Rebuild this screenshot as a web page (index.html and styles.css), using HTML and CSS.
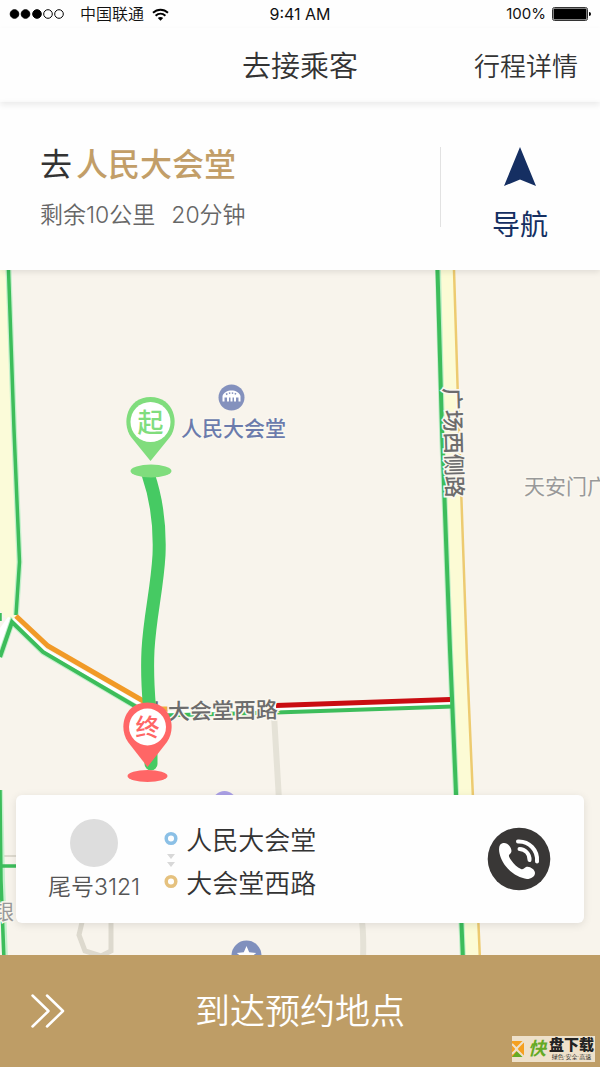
FILE: index.html
```html
<!DOCTYPE html>
<html lang="zh-CN">
<head>
  <meta charset="UTF-8" />
  <meta name="viewport" content="width=device-width, initial-scale=1.0"/>
  <title>去接乘客</title>
  <link rel="stylesheet" href="styles.css">
</head>
<body>

<div class="status">
  <div class="status-left">
    <svg width="55" height="12" viewBox="0 0 55 12" aria-hidden="true">
      <g stroke="#000">
        <circle cx="5.500" cy="6" r="4.300"/><circle cx="16.500" cy="6" r="4.300"/><circle cx="28" cy="6" r="4.300"/>
        <circle cx="39" cy="6" r="4.300" fill="none"/><circle cx="50" cy="6" r="4.300" fill="none"/>
      </g>
    </svg>
    <span class="carrier">中国联通</span>
    <svg width="17" height="13" viewBox="0 0 17 13" aria-hidden="true">
      <path d="M1 4.800C5.300.700 11.700.700 16 4.800M3.600 7.700c2.900-2.700 6.900-2.700 9.800 0" fill="none" stroke="#000" stroke-width="1.900"/>
      <path d="M5.800 10c1.500-1.500 3.900-1.500 5.400 0l-2.700 2.800z"/>
    </svg>
  </div>
  <span class="clock">9:41 AM</span>
  <div class="status-right">
    <span>100%</span>
    <svg width="39" height="14" viewBox="0 0 39 14" aria-hidden="true">
      <rect x=".5" y=".5" width="35" height="13" rx="2" fill="#fff" stroke="#333"/>
      <rect x="1.500" y="1.500" width="33" height="11" rx="1"/>
      <path d="M37 5q2 0 2 2t-2 2z"/>
    </svg>
  </div>
</div>

<header class="nav">
  <h1>去接乘客</h1>
  <a href="#detail">行程详情</a>
</header>

<section class="trip">
  <div class="trip-info">
    <h2>去<strong>人民大会堂</strong></h2>
    <p><span>剩余10公里</span><span>20分钟</span></p>
  </div>
  <button class="guide" type="button">
    <svg width="32" height="40" viewBox="0 0 32 40" aria-hidden="true">
      <path d="M16 0 32 39 16 32.500 0 39z" fill="#152f62"/>
    </svg>
    导航
  </button>
</section>

<main class="map">
  <svg class="map-canvas" viewBox="0 270 600 685" preserveAspectRatio="xMidYMin slice" role="img" aria-label="路线地图">
    <rect y="270" width="600" height="685" fill="#f8f4ec"/>

    <!-- side streets -->
    <g fill="none" stroke="#ddd9ce">
      <path d="M274 715 279 800M361 915q3 15 2 45" stroke="#e5e2d7" stroke-width="6"/>
      <path d="M111 915V951L101 956 85 951 79 935 83 918" stroke-width="5"/>
      <path d="M0 856H20" stroke-width="2"/>
    </g>

    <!-- left road -->
    <path d="M0 270H8L13 430 19 560 15 617 9 623 0 610z" fill="#fbfbd9"/>
    <path d="M0 655V628L8 617 15 619z" fill="#fff"/>
    <g fill="none" stroke="#c4f0cc" stroke-width="6">
      <path d="M8.500 270 14 430 19.500 562 16 615"/>
      <path d="M0 657 12 622 43 652 145 712M0 790 2 880 5 960"/>
    </g>
    <path d="M13 619 45 650 145 707" fill="none" stroke="#fff" stroke-width="3"/>
    <g fill="none" stroke="#3dbd5b" stroke-width="3.500">
      <path d="M8.500 270 14 430 19.500 562 16 615"/>
      <path d="M0 657 12 622 43 652 145 712" stroke-width="4"/>
      <path d="M0 790 1 880 4 960M0 866H20M0 613V621"/>
    </g>
    <path d="M16 616 48 646 145 702" fill="none" stroke="#f19a27" stroke-width="5"/>

    <!-- right road -->
    <path d="M438 270H454L462 565 479 960H462L448 600z" fill="#fcfbd5"/>
    <path d="M438 270 442 430 450 650 463 960" fill="none" stroke="#bdeec7" stroke-width="6"/>
    <path d="M437.500 270 442 430 450 650 463 960" fill="none" stroke="#3dbd5b" stroke-width="4"/>
    <path d="M454 270 458 400 467 660 480 960" fill="none" stroke="#edcb70" stroke-width="2.500"/>

    <!-- cross road -->
    <path d="M160 712.500 450 703.500" stroke="#fff" stroke-width="10"/>
    <path d="M155 709H168" stroke="#f0ad3b" stroke-width="5"/>
    <path d="M276 705.500 450 699.500" stroke="#c90d12" stroke-width="5"/>
    <path d="M160 715.500 276 712.500 453 706.500" fill="none" stroke="#3dbd5b" stroke-width="4"/>

    <!-- places -->
    <g class="label">
      <text class="place" x="181" y="436">人民大会堂</text>
      <text class="area" x="524" y="494">天安门广</text>
      <text class="area" x="-7" y="919">银</text>
      <text class="road" transform="translate(146 720) rotate(-1)">人大会堂西路</text>
      <text class="road" transform="translate(444 388) rotate(88.500)">广场西侧路</text>
    </g>
    <circle cx="231.500" cy="397.500" r="13" fill="#8491bd"/>
    <path d="M222.500 401.500v-5.500c2-7.500 16-7.500 18 0v5.500h-2v-4h-2.500v4h-2v-4h-1.500v4h-2v-4h-1.500v4h-2v-4h-2.500v4z" fill="#fff"/>
    <path d="M226 394.500q5.500-3 11 0" fill="none" stroke="#8491bd" stroke-width="1.500" stroke-dasharray="1.500 1.500"/>
    <circle cx="224.500" cy="803" r="12" fill="#aaa0e5"/>
    <circle cx="246.500" cy="955.500" r="15" fill="#8090bd"/>
    <path d="m246.500 946 2.700 6.300 7 .6-5.300 4.600 1.600 6.800-6-3.600-6 3.600 1.600-6.800-5.300-4.600 7-.6z" fill="#fff"/>

    <!-- route -->
    <path d="M148 474C157 500 160 530 159 555C157 590 150 615 148 650C146 690 151 710 151 735V764" fill="none" stroke="#46ca63" stroke-width="13" stroke-linecap="round"/>

    <!-- start and end pins -->
    <g fill="#80dd7d">
      <ellipse cx="151" cy="471" rx="20.500" ry="6.500"/>
      <path d="M150.500 461 131 437C121 423 127 397 150.500 397S180 423 170 437z"/>
      <circle cx="150.500" cy="422" r="20" fill="#fff"/>
      <text class="pin" x="150.500" y="432">起</text>
    </g>
    <g fill="#ff6666">
      <ellipse cx="147.500" cy="776" rx="20" ry="6"/>
      <path d="M147.500 767 128 742C118 728 124 702.500 147.500 702.500S177 728 167 742z"/>
      <circle cx="147.500" cy="727" r="18.500" fill="#fff"/>
      <text class="pin pin-end" x="147.500" y="736">终</text>
    </g>
  </svg>

  <section class="card">
    <div class="rider">
      <span class="avatar"></span>
      <span>尾号3121</span>
    </div>
    <div class="route">
      <svg width="14" height="58" viewBox="0 0 14 58" aria-hidden="true">
        <g fill="none" stroke-width="3.500">
          <circle cx="7" cy="7.500" r="4.800" stroke="#8bc0e6"/>
          <circle cx="7" cy="50.500" r="4.800" stroke="#e5c17e"/>
        </g>
        <path d="M3 23h8l-4 5zM3 31h8l-4 5z" fill="#d8d8d8"/>
      </svg>
      <div class="stops">
        <span>人民大会堂</span>
        <span>大会堂西路</span>
      </div>
    </div>
    <button class="call" type="button" aria-label="拨打电话">
      <svg width="64" height="64" viewBox="0 0 64 64" aria-hidden="true">
        <circle cx="32" cy="32" r="31.300" fill="#393736"/>
        <path d="M13 18C15.500 15 20 15.500 22.500 19C25 22.500 25 25 23 27C21 28.500 22 30 24 33C27 37.500 30 40 34 42C36 43 37 41 39 40C42 38.500 48 42 48 46C48 49.500 44 52 40 52C33 51 25 47 19 39.500C13 32 10.500 22 13 18z" fill="#fff"/>
        <path d="M31 14.500C42 14 51 23 50 34.500M32.500 22C38 22 43 27 42.500 33" fill="none" stroke="#fff" stroke-width="4" stroke-linecap="round"/>
      </svg>
    </button>
  </section>
</main>

<footer class="bottom">
  <button class="arrive" type="button">
    <svg width="34" height="34" viewBox="0 0 34 34" aria-hidden="true">
      <path d="M1.500 1.500 17.500 17 1.500 32.500M16 1.500 32 17 16 32.500" fill="none" stroke="#fff" stroke-width="2.500" stroke-linecap="round" stroke-linejoin="round"/>
    </svg>
    <span>到达预约地点</span>
  </button>
  <div class="mark">
    <svg width="14" height="18" viewBox="0 0 14 18" aria-hidden="true">
      <path d="M0 1H12V17H0z" fill="#f5a020"/>
      <path d="M0 17 5 11 12 17z" fill="#65aa25"/>
      <path d="M12 1 4 9 12 17M0 4 5 9 0 14" fill="none" stroke="#eee1cb" stroke-width="2"/>
    </svg>
    <b class="mark-quick">快</b>
    <div class="mark-name"><b>盘下载</b><small>绿色·安全·高速</small></div>
  </div>
</footer>

</body>
</html>
```
FILE: styles.css
```css
* {
  box-sizing: border-box;
}
body {
  margin: 0;
  min-height: 100vh;
  display: flex;
  flex-direction: column;
  font-family: Inter, "Noto Sans CJK SC", sans-serif;
  font-weight: 350;
  background: #fefefe;
  color: #333;
}
h1, h2, p {
  margin: 0;
  font-weight: 350;
}
button {
  padding: 0;
  border: none;
  background: none;
  font: inherit;
  color: inherit;
  cursor: pointer;
}
svg {
  display: block;
  flex: none;
}

/* status bar */
.status {
  display: grid;
  grid-template-columns: 1fr auto 1fr;
  align-items: center;
  height: 28px;
  padding: 0 9px;
  font-size: 15px;
  line-height: 28px;
  font-weight: 400;
  color: #111;
}
.clock {
  font-size: 16px;
}
.status-left, .status-right {
  display: flex;
  align-items: center;
}
.status-left {
  font-weight: 350;
  gap: 8px;
}
.carrier {
  font-size: 16px;
  padding-left: 8px;
}
.status-right {
  justify-content: flex-end;
  gap: 6px;
}

/* title bar */
.nav {
  position: relative;
  z-index: 2;
  display: grid;
  grid-template-columns: 1fr auto 1fr;
  align-items: center;
  height: 74px;
  padding: 4px 22px 0;
  box-shadow: 0 3px 6px rgba(0, 0, 0, 0.08);
}
.nav h1 {
  grid-column: 2;
  font-size: 29px;
  line-height: 40px;
}
.nav a {
  justify-self: end;
  font-size: 26px;
  line-height: 40px;
  color: inherit;
  text-decoration: none;
}

/* trip panel */
.trip {
  position: relative;
  z-index: 1;
  display: flex;
  align-items: center;
  height: 168px;
  padding-left: 40px;
  background: #fefefe;
  box-shadow: 0 2px 6px rgba(0, 0, 0, 0.1);
}
.trip-info {
  flex: 1;
  padding-top: 6px;
}
.trip-info h2 {
  display: flex;
  gap: 4px;
  font-size: 32px;
  line-height: 52px;
  font-weight: 400;
}
.trip-info strong {
  font-weight: 500;
  color: #c29e68;
}
.trip-info p {
  display: flex;
  gap: 16px;
  font-size: 23px;
  line-height: 48px;
  color: #666;
}
.guide {
  display: flex;
  flex-direction: column;
  align-items: center;
  gap: 16px;
  width: 160px;
  margin-top: 22px;
  font-size: 28px;
  line-height: 44px;
  font-weight: 400;
  color: #152f62;
  background: linear-gradient(#e2e2e2, #e2e2e2) 0 0 / 1px 80px no-repeat;
}

/* map */
.map {
  position: relative;
  flex: 1;
  display: flex;
  flex-direction: column;
  justify-content: flex-end;
  padding: 32px 16px;
  min-height: 480px;
  overflow: hidden;
}
.map-canvas {
  position: absolute;
  top: 0;
  left: 0;
  width: 100%;
  height: 100%;
}
.label text {
  font-size: 21px;
  font-weight: 400;
  stroke: #faf7ef;
  stroke-width: 3px;
  paint-order: stroke;
}
.label .place {
  font-weight: 500;
  fill: #6b7bac;
}
.label .area {
  fill: #999;
}
.label .road {
  font-size: 22px;
  font-weight: 500;
  fill: #6c6c6c;
}
.pin {
  font-size: 26px;
  font-weight: 500;
  text-anchor: middle;
}
.pin-end {
  font-size: 24px;
}

/* order card */
.card {
  position: relative;
  display: flex;
  align-items: center;
  height: 128px;
  padding: 0 33px 0 32px;
  border-radius: 6px;
  background: #fefefe;
  box-shadow: 0 2px 8px rgba(0, 0, 0, 0.1);
}
.rider {
  display: flex;
  flex-direction: column;
  align-items: center;
  gap: 4px;
  padding-top: 4px;
  font-size: 23px;
  line-height: 32px;
  color: #555;
}
.avatar {
  width: 48px;
  height: 48px;
  border-radius: 50%;
  background: #ddd;
}
.route {
  flex: 1;
  display: flex;
  align-items: center;
  gap: 8px;
  padding: 2px 0 0 24px;
}
.stops {
  display: flex;
  flex-direction: column;
  padding-top: 4px;
  font-size: 26px;
  line-height: 43px;
}

/* bottom button */
.bottom {
  position: relative;
  background: #be9d66;
}
.arrive {
  display: grid;
  grid-template-columns: 1fr auto 1fr;
  align-items: center;
  width: 100%;
  height: 112px;
  padding: 0 31px;
  font-size: 35px;
  line-height: 48px;
  color: #fff;
}
.mark {
  position: absolute;
  right: 5px;
  bottom: 5px;
  display: flex;
  align-items: center;
  gap: 2px;
  height: 26px;
  background: #eee1cb;
  color: #222;
}
.mark-quick {
  font-size: 18px;
  line-height: 26px;
  font-weight: 700;
  font-style: italic;
  color: #65aa25;
}
.mark-name {
  display: flex;
  flex-direction: column;
  align-items: center;
  width: 47px;
}
.mark-name b {
  font-size: 15px;
  line-height: 16px;
  font-weight: 900;
}
.mark-name small {
  font-size: 6px;
  line-height: 8px;
  white-space: nowrap;
}
```
